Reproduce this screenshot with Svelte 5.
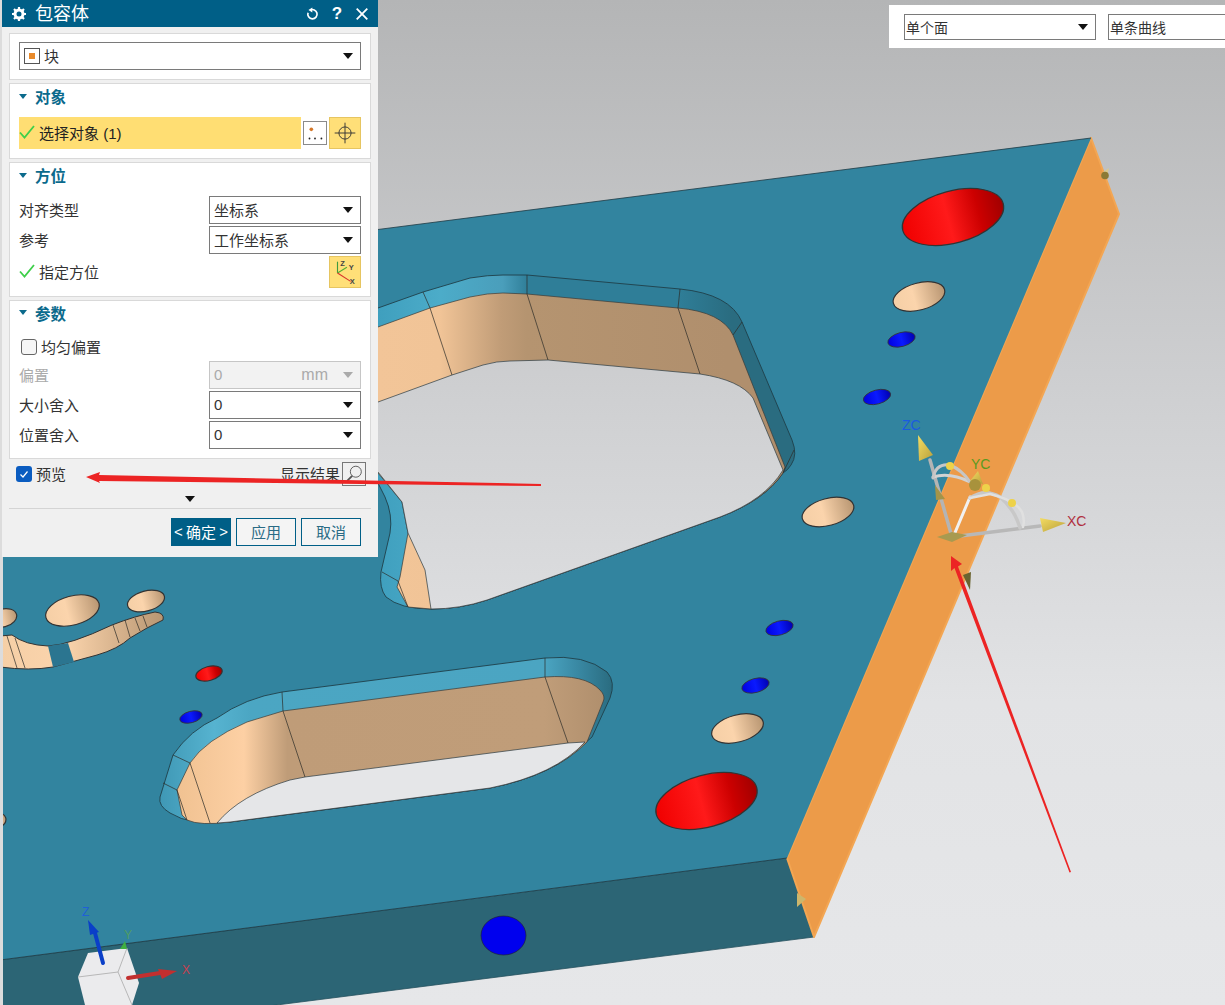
<script>
     // Holes on the top face of the plate: tone picks the gradient, values measured off the view.
     const holes = [
          { cx: 953, cy: 217, rx: 52, ry: 26, tone: "red" },
          { cx: 706.5, cy: 801, rx: 52, ry: 26, tone: "red" },
          { cx: 209, cy: 673.5, rx: 13.5, ry: 7, tone: "red" },
          { cx: 919, cy: 296.5, rx: 26.5, ry: 13.5, tone: "tan" },
          { cx: 828, cy: 512, rx: 26.5, ry: 13.5, tone: "tan" },
          { cx: 737.5, cy: 728.5, rx: 26.5, ry: 13.5, tone: "tan" },
          { cx: 72.5, cy: 610.5, rx: 27.5, ry: 14.5, tone: "tan" },
          { cx: 146, cy: 601, rx: 19, ry: 10, tone: "tan" },
          { cx: 3, cy: 618, rx: 14, ry: 9, tone: "tan" },
          { cx: -2, cy: 820, rx: 8, ry: 7, tone: "tan" },
          { cx: 901.5, cy: 339.5, rx: 14, ry: 7, tone: "blue" },
          { cx: 877, cy: 397, rx: 14, ry: 7, tone: "blue" },
          { cx: 779.5, cy: 628, rx: 14, ry: 7, tone: "blue" },
          { cx: 755.5, cy: 685.5, rx: 14, ry: 7, tone: "blue" },
          { cx: 191, cy: 717, rx: 11.5, ry: 5.7, tone: "blue" }
     ];

     const facets = [
          "M423 292L430 308L452 375",
          "M527 275L527 294L548 360",
          "M680 289L678 308L700 374",
          "M742 322L733 335",
          "M794 450L783 473",
          "M382 572L398 581L408 607",
          "M282 692L283 711L305 777",
          "M545 658L545 677L568 743",
          "M173 755L190 763L210 823",
          "M163 783L177 790L187 820",
          "M7 636L17 668",
          "M15 638L25 668",
          "M113 625L119 643",
          "M125 620L130 637",
          "M135 618L140 631",
          "M143 616L147 627"
     ];
</script>

<div class="view">
     <svg class="scene" viewBox="0 0 1225 1005" aria-hidden="true">
          <defs>
               <linearGradient id="bg" gradientUnits="userSpaceOnUse" x1="0" y1="0" x2="0" y2="1005">
                    <stop offset="0" stop-color="#b4b5b6" />
                    <stop offset="0.4" stop-color="#cfd0d2" />
                    <stop offset="0.7" stop-color="#e2e3e5" />
                    <stop offset="1" stop-color="#e6e7e9" />
               </linearGradient>
               <linearGradient id="red">
                    <stop offset="0" stop-color="#f00000" />
                    <stop offset="0.45" stop-color="#ff1a1a" />
                    <stop offset="0.75" stop-color="#cc0000" />
                    <stop offset="1" stop-color="#a00000" />
               </linearGradient>
               <linearGradient id="tan">
                    <stop offset="0" stop-color="#f5cfa6" />
                    <stop offset="0.4" stop-color="#fbd4ac" />
                    <stop offset="1" stop-color="#b89672" />
               </linearGradient>
               <linearGradient id="blue">
                    <stop offset="0" stop-color="#0000e0" />
                    <stop offset="0.5" stop-color="#0a1aff" />
                    <stop offset="1" stop-color="#0000b0" />
               </linearGradient>
               <linearGradient id="bevelA" gradientUnits="userSpaceOnUse" x1="378" y1="0" x2="794" y2="0">
                    <stop offset="0" stop-color="#3f9fbe" />
                    <stop offset="0.15" stop-color="#4cacc9" />
                    <stop offset="0.3" stop-color="#4a9ebb" />
                    <stop offset="0.36" stop-color="#2f7e98" />
                    <stop offset="0.72" stop-color="#2f7e98" />
                    <stop offset="0.85" stop-color="#2a6c80" />
                    <stop offset="1" stop-color="#2a6c80" />
               </linearGradient>
               <linearGradient id="wallA" gradientUnits="userSpaceOnUse" x1="378" y1="0" x2="790" y2="0">
                    <stop offset="0" stop-color="#f2c598" />
                    <stop offset="0.15" stop-color="#f1c497" />
                    <stop offset="0.3" stop-color="#c09c77" />
                    <stop offset="0.36" stop-color="#b59470" />
                    <stop offset="0.85" stop-color="#b08f6d" />
                    <stop offset="1" stop-color="#b08f6d" />
               </linearGradient>
               <linearGradient id="bevelB" gradientUnits="userSpaceOnUse" x1="160" y1="0" x2="612" y2="0">
                    <stop offset="0" stop-color="#3f98b5" />
                    <stop offset="0.12" stop-color="#56b3d0" />
                    <stop offset="0.2" stop-color="#4ba6c3" />
                    <stop offset="0.85" stop-color="#4ba5c2" />
                    <stop offset="0.92" stop-color="#3a8aa5" />
                    <stop offset="1" stop-color="#2a6c80" />
               </linearGradient>
               <linearGradient id="wallB" gradientUnits="userSpaceOnUse" x1="170" y1="0" x2="605" y2="0">
                    <stop offset="0" stop-color="#efc08f" />
                    <stop offset="0.17" stop-color="#fdd0a4" />
                    <stop offset="0.27" stop-color="#bf9c78" />
                    <stop offset="0.86" stop-color="#c09d79" />
                    <stop offset="1" stop-color="#b08f6d" />
               </linearGradient>
               <linearGradient id="brass" x1="0" y1="0" x2="1" y2="1">
                    <stop offset="0" stop-color="#f4dc62" />
                    <stop offset="1" stop-color="#b9a03c" />
               </linearGradient>
          </defs>

          <rect width="1225" height="1005" fill="url(#bg)" />

          <!-- plate -->
          <polygon points="787,858 814,937 0,1040 0,960" fill="#2c6575" stroke="#24505e" stroke-width="0.8" />
          <polygon points="1091,138 1119,214 814,937 787,858" fill="#ec9b49" stroke="#f3a653" stroke-width="2" stroke-linejoin="round" />
          <polygon points="1091,138 787,858 0,960 0,278" fill="#32849f" />
          <path d="M1091 138L0 278M787 858L0 960" stroke="#1e3a44" stroke-width="0.8" fill="none" />

          <!-- big pocket, top -->
          <path
               d="M340 320L378 308L423 292L470 278Q488 275 503 275L527 275L680 289Q730 294 742 322L792 440Q798 455 791 465Q788 470 783 473Q765 500 720 517L487 600Q460 609 431 609Q400 609 386 597Q379 588 381 572L390 533Q393 515 385 497L378 483L340 440Z"
               fill="url(#bevelA)" stroke="#1f3f4a" stroke-width="0.9" />
          <path
               d="M340 340L378 327L430 308L470 297Q488 293 503 293L527 294L678 308Q722 312 733 335L785 467L783 473Q765 500 720 517L487 600Q460 609 431 609L408 607L397 587L400 577L408 533L402 502L378 473L340 440Z"
               fill="url(#wallA)" stroke="#3a3a36" stroke-width="0.7" />
          <path
               d="M340 418L378 402L452 375L483 365Q497 361 510 361L548 360L700 374Q740 380 753 398L783 470Q765 500 720 517L487 600Q460 609 431 609L425 570L408 533L402 502L378 472L340 440Z"
               fill="url(#bg)" stroke="#2a3a40" stroke-width="0.7" />

          <!-- long pocket, bottom -->
          <path
               d="M160 797L173 755Q190 730 217 718Q245 698 282 692L545 658Q585 654 607 672Q616 682 610 698L592 737L585 743Q555 775 490 788L230 822Q190 826 170 813Q158 806 160 797Z"
               fill="url(#bevelB)" stroke="#1f3f4a" stroke-width="0.9" />
          <path
               d="M177 790L190 763Q205 740 247 722L283 711L545 677Q585 674 600 690Q606 696 603 702L587 742Q555 775 490 788L230 822Q200 826 187 820L182 815Z"
               fill="url(#wallB)" stroke="#3a3a36" stroke-width="0.7" />
          <path
               d="M217 823Q240 795 290 780L305 777L568 743L585 742Q555 775 490 788L230 822Z"
               fill="#e5e6e8" stroke="#2a3a40" stroke-width="0.7" />

          <!-- curved slot on the left -->
          <path
               d="M0 636L12 635Q25 645 48 646Q70 645 112 625Q135 616 155 612Q165 613 163 620L147 628L130 638Q118 649 97 655L53 667Q30 671 0 667Z"
               fill="url(#tan)" stroke="#333" stroke-width="1" />
          <polygon points="48,646 68,643 74,662 53,667" fill="#2b7590" />

          {#each holes as hole}
               <ellipse
                    cx={hole.cx}
                    cy={hole.cy}
                    rx={hole.rx}
                    ry={hole.ry}
                    transform={`rotate(-15 ${hole.cx} ${hole.cy})`}
                    fill={`url(#${hole.tone})`}
                    stroke="#333"
                    stroke-width={hole.tone === "blue" ? 0.8 : 1.2} />
          {/each}
          <ellipse cx="503.5" cy="935.5" rx="22.5" ry="19.5" fill="#0000ee" stroke="#222" stroke-width="0.6" />

          {#each facets as line}
               <path d={line} fill="none" stroke="#2c2c28" stroke-width="0.7" />
          {/each}

          <!-- small markers on the edges -->
          <polygon points="1103,172 1109,168 1107,177" fill="#d8c990" />
          <circle cx="1105" cy="175.5" r="3.8" fill="#8b7a35" />
          <polygon points="797,893 806,899 797,907" fill="#cdb66c" />
          <polygon points="963,575 971,572 970,590" fill="#6b6430" />

          <!-- working csys -->
          <g fill="none" stroke-linecap="round">
               <path d="M952 537L930 460" stroke="#b4b4b4" stroke-width="3.5" />
               <path d="M952 537L1040 526" stroke="#b8b8b8" stroke-width="3.5" />
               <path d="M954 535L970 497" stroke="#f1f1f1" stroke-width="3" />
               <path d="M933 477Q950 472 970 482" stroke="#d2d2d2" stroke-width="3" />
               <path d="M933 478Q936 463 950 465Q962 470 970 482" stroke="#c6c6c6" stroke-width="3" />
               <path d="M970 498Q985 488 1000 497Q1015 510 1020 528" stroke="#c8c8c8" stroke-width="3.5" />
               <path d="M970 498L990 494Q1015 500 1022 512Q1025 520 1023 527" stroke="#e0e0e0" stroke-width="2.5" />
          </g>
          <polygon points="918,435 933,455 919,461" fill="url(#brass)" />
          <polygon points="1066,523 1040,518 1043,532" fill="url(#brass)" />
          <polygon points="978,471 970,481 983,484" fill="url(#brass)" />
          <polygon points="935,485 945,499 936,500" fill="#a49448" />
          <polygon points="937,537 952,532 967,535 952,542" fill="#a89a50" />
          <circle cx="975" cy="485" r="6" fill="#a8923c" />
          <circle cx="950" cy="466" r="4" fill="#eed24a" />
          <circle cx="986" cy="488" r="4" fill="#eed24a" />
          <circle cx="1012" cy="503" r="4" fill="#eed24a" />
          <text class="axis" x="902" y="430" fill="#1a5be0">ZC</text>
          <text class="axis" x="971" y="469" fill="#5a9a20">YC</text>
          <text class="axis" x="1067" y="526" fill="#b03040">XC</text>

          <!-- view triad -->
          <polygon points="88,953 127,948 139,983 132,1005 85,1005 78,977" fill="#ebebed" />
          <path d="M78 977L118 972L127 948M118 972L132 1005" fill="none" stroke="#a9a9a9" stroke-width="0.8" />
          <path d="M103 963L95 933" stroke="#0a3fc8" stroke-width="4" stroke-linecap="round" />
          <polygon points="88,920 99,932 90,935" fill="#0a3fc8" />
          <path d="M128 978L160 973" stroke="#c22f2f" stroke-width="4" stroke-linecap="round" />
          <polygon points="177,971 158,969 162,979" fill="#c22f2f" />
          <polygon points="120,949 125,941 127,949" fill="#40b040" />
          <text class="mini" x="82" y="916" fill="#2060d8">Z</text>
          <text class="mini" x="124" y="939" fill="#4f9c63">Y</text>
          <text class="mini" x="182" y="974" fill="#c84050">X</text>

          <path d="M0 0H3V1005H0Z" fill="#dcdcdc" />
     </svg>

     <section class="toolbar">
          <div class="select plain wide">
               <span>单个面</span>
               <i class="caret"></i>
          </div>
          <div class="select plain rest">
               <span>单条曲线</span>
          </div>
     </section>

     <section class="dialog">
          <header class="titlebar">
               <svg class="gear" viewBox="0 0 14 14" aria-hidden="true">
                    <circle cx="7" cy="7" r="4" fill="none" stroke="#fff" stroke-width="3" />
                    <path d="M7 0V3M7 11V14M0 7H3M11 7H14M2 2L4.2 4.2M9.8 9.8L12 12M2 12L4.2 9.8M9.8 4.2L12 2" stroke="#fff" stroke-width="2.2" />
               </svg>
               <h1>包容体</h1>
               <svg class="reset" viewBox="0 0 14 14" aria-hidden="true">
                    <path d="M4.4 2.9A5 5 0 1 1 2.2 5.6" fill="none" stroke="#fff" stroke-width="1.8" />
                    <polygon points="6.8,0 6.8,5.4 2.6,2.8" fill="#fff" />
               </svg>
               <span class="help">?</span>
               <svg class="close" viewBox="0 0 12 12" aria-hidden="true">
                    <path d="M0.7 0.7L11.3 11.3M11.3 0.7L0.7 11.3" stroke="#fff" stroke-width="1.8" />
               </svg>
          </header>

          <div class="body">
               <div class="panel">
                    <div class="select">
                         <svg class="block-icon" viewBox="0 0 16 16" aria-hidden="true">
                              <rect x="0.5" y="0.5" width="15" height="15" fill="#fff" stroke="#555" />
                              <rect x="5" y="5" width="6" height="6" fill="#e98a2a" />
                         </svg>
                         <span>块</span>
                         <i class="caret"></i>
                    </div>
               </div>

               <div class="panel">
                    <h2><i class="twist"></i>对象</h2>
                    <div class="pick">
                         <div class="picked">
                              <svg class="check" viewBox="0 0 16 14" aria-hidden="true">
                                   <path d="M1 7.5L5.5 12.5L15 1" fill="none" stroke="#3ecf4a" stroke-width="1.8" />
                              </svg>
                              选择对象 (1)
                         </div>
                         <button class="dots" type="button" aria-label="More">
                              <svg viewBox="0 0 24 24" aria-hidden="true">
                                   <circle cx="8" cy="8" r="2" fill="#d5782a" />
                                   <circle cx="6" cy="18" r="1" fill="#222" />
                                   <circle cx="12" cy="18" r="1" fill="#222" />
                                   <circle cx="19" cy="18" r="1" fill="#222" />
                              </svg>
                         </button>
                         <button class="tool" type="button" aria-label="Point">
                              <svg viewBox="0 0 32 32" aria-hidden="true">
                                   <circle cx="16" cy="16" r="6.5" fill="none" stroke="#333" />
                                   <path d="M16 5V27M5 16H27" stroke="#333" />
                              </svg>
                         </button>
                    </div>
               </div>

               <div class="panel tight">
                    <h2><i class="twist"></i>方位</h2>
                    <div class="row">
                         <label for="align">对齐类型</label>
                         <div class="select field" id="align"><span>坐标系</span><i class="caret"></i></div>
                    </div>
                    <div class="row">
                         <label for="ref">参考</label>
                         <div class="select field" id="ref"><span>工作坐标系</span><i class="caret"></i></div>
                    </div>
                    <div class="row csys">
                         <div class="spec">
                              <svg class="check" viewBox="0 0 16 14" aria-hidden="true">
                                   <path d="M1 7.5L5.5 12.5L15 1" fill="none" stroke="#3ecf4a" stroke-width="1.8" />
                              </svg>
                              指定方位
                         </div>
                         <button class="tool" type="button" aria-label="CSYS">
                              <svg viewBox="0 0 32 32" aria-hidden="true">
                                   <path d="M8 17V5" stroke="#3f9a3f" stroke-width="1.2" />
                                   <path d="M8 17L18 11" stroke="#55b030" stroke-width="1.2" />
                                   <path d="M8 17L22 26" stroke="#d8342c" stroke-width="1.2" />
                                   <text class="tiny" x="11" y="10">Z</text>
                                   <text class="tiny" x="20" y="14">Y</text>
                                   <text class="tiny" x="21" y="29">X</text>
                              </svg>
                         </button>
                    </div>
               </div>

               <div class="panel params">
                    <h2><i class="twist"></i>参数</h2>
                    <div class="even">
                         <i class="box"></i>
                         <span>均匀偏置</span>
                    </div>
                    <div class="row first">
                         <label class="off" for="offset">偏置</label>
                         <div class="select field disabled" id="offset"><span>0</span><em>mm</em><i class="caret"></i></div>
                    </div>
                    <div class="row">
                         <label for="size">大小舍入</label>
                         <div class="select field" id="size"><span>0</span><i class="caret"></i></div>
                    </div>
                    <div class="row">
                         <label for="place">位置舍入</label>
                         <div class="select field" id="place"><span>0</span><i class="caret"></i></div>
                    </div>
               </div>

               <div class="preview">
                    <i class="box on">
                         <svg viewBox="0 0 16 16" aria-hidden="true">
                              <path d="M4.5 8.5L7 11L11.5 5.5" fill="none" stroke="#fff" stroke-width="1.2" />
                         </svg>
                    </i>
                    <span>预览</span>
                    <span class="result">显示结果</span>
                    <button class="lens" type="button" aria-label="Show result">
                         <svg viewBox="0 0 24 24" aria-hidden="true">
                              <circle cx="14" cy="9.5" r="6" fill="none" stroke="#555" />
                              <path d="M10 14L4.5 19.5" stroke="#555" stroke-width="2" />
                         </svg>
                    </button>
               </div>

               <div class="more"><i class="caret"></i></div>

               <footer class="actions">
                    <button class="primary" type="button"><span>&lt;</span>确定<span>&gt;</span></button>
                    <button type="button">应用</button>
                    <button type="button">取消</button>
               </footer>
          </div>
     </section>

     <!-- markup arrows drawn over everything -->
     <svg class="marks" viewBox="0 0 1225 1005" aria-hidden="true">
          <polygon points="86,477 100,472 99,475 541,484 541,486 99,481 100,483" fill="#ec2424" />
          <polygon points="951,556 962,564 958,566.5 1071,872 1069.5,872.5 954.5,568 951,571" fill="#ec2424" />
     </svg>
</div>

<style>
     :global(body) {
          margin: 0;
     }

     .view {
          position: relative;
          width: 1225px;
          height: 1005px;
          overflow: hidden;
          font-family: "Liberation Sans", "Noto Sans CJK SC", sans-serif;
          font-size: 15px;
          color: #333;
     }

     .scene,
     .marks {
          position: absolute;
          left: 0;
          top: 0;
          width: 1225px;
          height: 1005px;
     }

     .marks {
          pointer-events: none;
     }

     .axis {
          font-size: 14px;
     }

     .mini {
          font-size: 12px;
     }

     .tiny {
          font-size: 8px;
          font-weight: bold;
          fill: #444;
     }

     .toolbar {
          position: absolute;
          left: 889px;
          top: 5px;
          width: 336px;
          height: 43px;
          box-sizing: border-box;
          padding: 9px 0 0 15px;
          display: flex;
          gap: 12px;
          background: #fff;
          overflow: hidden;
     }

     .select {
          height: 28px;
          box-sizing: border-box;
          display: flex;
          align-items: center;
          gap: 4px;
          padding: 0 7px 0 4px;
          background: #fff;
          border: 1px solid #7a7a7a;
          white-space: nowrap;
     }

     .select span,
     .row label,
     .even span,
     .preview span {
          padding-bottom: 2px;
     }

     .select .caret {
          margin-left: auto;
     }

     .select.plain {
          height: 26px;
          padding: 0 7px 0 1px;
          font-size: 14px;
          flex: none;
     }

     .select.plain span {
          padding-bottom: 0;
     }

     .wide {
          width: 192px;
     }

     .rest {
          width: 200px;
     }

     .block-icon {
          width: 16px;
          height: 16px;
          flex: none;
     }

     .caret {
          display: block;
          width: 0;
          height: 0;
          border-left: 5px solid transparent;
          border-right: 5px solid transparent;
          border-top: 6px solid #111;
     }

     .dialog {
          position: absolute;
          left: 2px;
          top: 0;
          width: 376px;
          height: 557px;
          background: #f0f0f0;
          display: flex;
          flex-direction: column;
     }

     .titlebar {
          height: 27px;
          flex: none;
          display: flex;
          align-items: center;
          padding: 0 10px;
          background: #005f87;
          color: #fff;
     }

     .titlebar h1 {
          margin: 0 0 0 9px;
          padding-top: 2px;
          font-size: 18px;
          font-weight: normal;
          line-height: 25px;
     }

     .gear {
          width: 14px;
          height: 14px;
     }

     .reset {
          width: 13px;
          height: 14px;
          margin-left: auto;
     }

     .help {
          margin-left: 12px;
          width: 12px;
          text-align: center;
          font-size: 17px;
          font-weight: bold;
     }

     .close {
          width: 12px;
          height: 12px;
          margin-left: 13px;
     }

     .body {
          padding: 6px 7px 0;
          display: flex;
          flex-direction: column;
          gap: 3px;
     }

     .panel {
          box-sizing: border-box;
          padding: 8px 9px 9px;
          background: #fff;
          border: 1px solid #d9d9d9;
     }

     .panel h2 {
          margin: -8px 0 7px;
          height: 26px;
          box-sizing: border-box;
          padding-bottom: 2px;
          display: flex;
          align-items: center;
          gap: 8px;
          font-size: 15.5px;
          font-weight: bold;
          color: #0b6a8c;
     }

     .tight {
          padding-bottom: 8px;
     }

     .params h2 {
          height: 25px;
          margin-bottom: 8px;
     }

     .twist {
          width: 0;
          height: 0;
          border-left: 4.5px solid transparent;
          border-right: 4.5px solid transparent;
          border-top: 5px solid #0b6a8c;
     }

     .pick {
          display: flex;
          align-items: center;
          height: 32px;
     }

     .picked {
          width: 282px;
          height: 32px;
          box-sizing: border-box;
          padding-bottom: 2px;
          flex: none;
          display: flex;
          align-items: center;
          gap: 4px;
          background: #ffde73;
          color: #222;
     }

     .check {
          width: 16px;
          height: 14px;
          margin-left: 0;
          flex: none;
     }

     .dots {
          width: 24px;
          height: 24px;
          margin: 0 2px;
          padding: 0;
          flex: none;
          background: #fff;
          border: 1px solid #8a8a8a;
     }

     .dots svg,
     .tool svg,
     .lens svg {
          display: block;
          width: 100%;
          height: 100%;
     }

     .tool {
          width: 32px;
          height: 32px;
          padding: 0;
          flex: none;
          background: #ffdf78;
          border: 1px solid #e6c561;
          box-sizing: border-box;
     }

     .row {
          display: flex;
          align-items: center;
          justify-content: space-between;
          margin-top: 2px;
     }

     .panel h2 + .row {
          margin-top: 0;
     }

     .row.first {
          margin-top: 1px;
     }

     .csys .tool {
          margin-left: auto;
     }

     .field {
          width: 152px;
          flex: none;
     }

     .spec {
          display: flex;
          align-items: center;
          gap: 4px;
          padding-bottom: 2px;
     }

     .even {
          height: 26px;
          padding-left: 2px;
          display: flex;
          align-items: center;
          gap: 4px;
     }

     .box {
          width: 16px;
          height: 16px;
          box-sizing: border-box;
          flex: none;
          border: 1px solid #666;
          border-radius: 3px;
          background: #f6f6f6;
     }

     .box.on {
          border: none;
          background: #0a5cc0;
     }

     .box svg {
          display: block;
     }

     .off {
          color: #aaa;
     }

     .disabled {
          background: #f2f2f2;
          border-color: #c6c6c6;
          color: #aaa;
     }

     .disabled em {
          margin-left: auto;
          margin-right: 11px;
          font-size: 16px;
          font-style: normal;
     }

     .disabled .caret {
          margin-left: 0;
          border-top-color: #aaa;
     }

     .preview {
          height: 24px;
          padding: 0 5px 0 7px;
          display: flex;
          align-items: center;
          gap: 4px;
     }

     .result {
          margin-left: auto;
     }

     .lens {
          width: 24px;
          height: 24px;
          margin-left: -2px;
          padding: 0;
          background: transparent;
          border: 1px solid #777;
     }

     .more {
          height: 19px;
          display: flex;
          align-items: center;
          justify-content: center;
          border-bottom: 1px solid #d4d4d4;
     }

     .actions {
          margin-top: 6px;
          padding-right: 10px;
          display: flex;
          justify-content: flex-end;
          gap: 5px;
     }

     .actions button {
          width: 60px;
          height: 28px;
          padding: 0 0 2px;
          box-sizing: border-box;
          background: #f4f4f4;
          border: 1px solid #005f87;
          font: inherit;
          color: #2a6b85;
     }

     .actions .primary {
          display: flex;
          align-items: center;
          justify-content: space-between;
          padding: 0 2px 2px;
          background: #005f87;
          color: #fff;
     }
</style>
